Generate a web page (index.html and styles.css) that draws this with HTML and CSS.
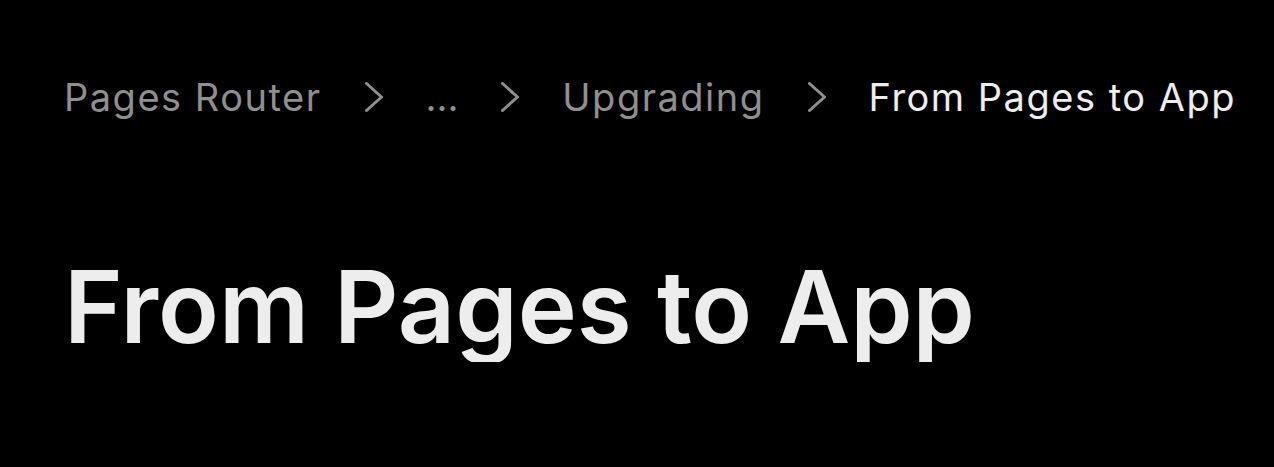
FILE: index.html
```html
<!DOCTYPE html>
<html lang="en">
<head>
<meta charset="utf-8">
<title>From Pages to App</title>
<link rel="stylesheet" href="styles.css">
</head>
<body>
<main class="page">
  <nav class="crumbs" aria-label="Breadcrumb">
    <a class="crumb" href="#">Pages Router</a>
    <svg class="sep" viewBox="0 0 18 30" aria-hidden="true"><path d="M1.5 1.5 L16.5 15 L1.5 28.5"/></svg>
    <span class="crumb ellipsis">...</span>
    <svg class="sep" viewBox="0 0 18 30" aria-hidden="true"><path d="M1.5 1.5 L16.5 15 L1.5 28.5"/></svg>
    <a class="crumb" href="#">Upgrading</a>
    <svg class="sep" viewBox="0 0 18 30" aria-hidden="true"><path d="M1.5 1.5 L16.5 15 L1.5 28.5"/></svg>
    <span class="crumb current">From Pages to App</span>
  </nav>
  <h1 class="title">From Pages to App</h1>
</main>
</body>
</html>
```

FILE: styles.css
```css
html, body {
  margin: 0;
  padding: 0;
  background: #000;
}
body {
  font-family: Inter, "Noto Sans", "Liberation Sans", sans-serif;
  color: #ededed;
}
.page {
  padding: 72px 0 0 64px;
}
.crumbs {
  display: flex;
  align-items: center;
  gap: 43px;
  height: 50px;
  white-space: nowrap;
}
.crumb {
  flex: none;
  font-size: 38px;
  color: #8f8f8f;
  text-decoration: none;
  line-height: 50px;
  letter-spacing: 1.5px;
}
.crumb.ellipsis {
  letter-spacing: 0;
}
.crumb.current {
  color: #ededed;
}
.sep {
  width: 18px;
  height: 30px;
  flex: none;
}
.sep path {
  fill: none;
  stroke: #8f8f8f;
  stroke-width: 3;
  stroke-linecap: round;
  stroke-linejoin: round;
}
.title {
  margin: 130px 0 0 0;
  font-size: 100px;
  font-weight: 600;
  line-height: 110px;
  letter-spacing: 0;
  color: #ededed;
  white-space: nowrap;
}
```
